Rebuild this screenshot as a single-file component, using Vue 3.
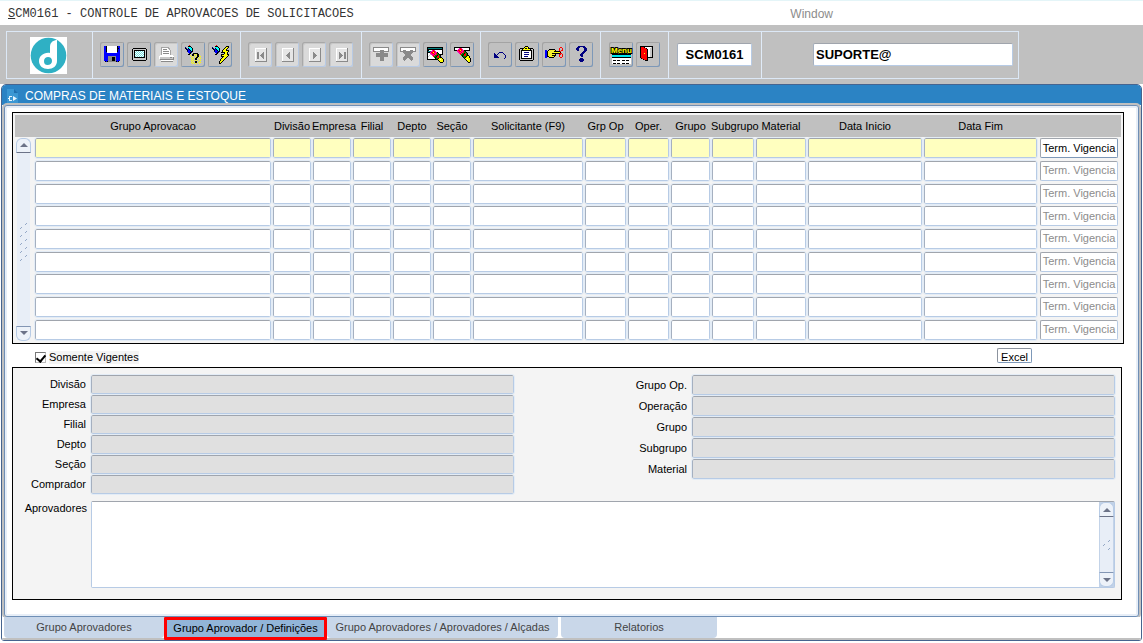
<script setup>
import { ref, h } from 'vue'

const palette = {
  K: '#000000', W: '#ffffff', B: '#0000ff', N: '#000080', G: '#8a8a8a', g: '#a4a4a4',
  l: '#c8c8c8', s: '#e6e6e6', Y: '#ffff00', R: '#ff0000', C: '#00ffff', T: '#008080', M: '#ff00a8',
  E: '#008000', y: '#e8e060', c: '#6fdede',
}

const icons = {
  save: [4, 4, [
    'BBKWWWWWWWWWWKBB', 'BBKWWWWWWWWWWKBB', 'BBKWWWWWWWWWWKKB', 'BBKWWWWWWWWWWKBB',
    'BBKWWWWWWWWWWKBB', 'BBKWWWWWWWWWWKBB', 'BBBWWWWWWWWWWBBB', 'BBBBBBBBBBBBBBBB',
    'BBBBBBBBBBBBBBBB', 'BBBBBBBBBBBBBBBB', 'BBBBGGGGGGGGBBBB', 'BBBBGGGGKKKGBBBB',
    'BBBBGGGGKKKGBBBB', 'BBBBGGGGKKKGBBBB', 'BBBBGGGGKKKGBBBB', '.KBKGGGGGGGGKBK.']],
  screen: [5, 6, [
    '.KKKKKKKKKKKKK.', 'KlllllllllllllK', 'KlKKKKKKKKKKKlK', 'KlKWcWcWcWcWKlK', 'KlKcWcWcWcWcKlK',
    'KlKWcWcWcWcWKlK', 'KlKcWcWcWcWcKlK', 'KlKWcWcWcWcWKlK', 'KlKcWcWcWcWcKlK', 'KlKKKKKKKKKKKlK',
    'KlllllllllllllK', 'KlllllllllllllK', '.KKKKKKKKKKKKK.']],
  print: [5, 5, [
    '..gggggggg......', '..gWWWWWWgg.....', '..gWGGGGWWg.....', '..gWWWWWWWWg....', '..gWGGGGGGWg....',
    '..gWWWWWWWWg....', '..gWGGGGGGWg....', '..gWWWWWWWWg....', '.WWWWWWWWWWWWW..', 'WWWWWWWWWWWWWWW.',
    'WllllllllllGGlG.', 'WlllllllllllllG.', '.GGGGGGGGGGGGGG.', '..WWWWWWWWWWWW..', '..GGGGGGGGGGGG..']],
  find: [4, 3, [
    '....R...............', '...KKK..............', 'N..CCCK.............', 'KN.KCCCK............',
    '.KNBKCCK............', '..KBBKCK............', '..NBBBKK............', '...BBKN.............',
    '....NK..KKKKK.......', '...KK..KKY.YKK......', '.....Y.KK.Y.KKY.....', '......Y.Y..YKK.Y....',
    '.......Y..YKK.Y.....', '......Y.Y.KK.Y.Y....', '.......Y..KK..Y.....', '......Y.Y.Y.Y..Y....',
    '.......Y..KK..Y.....', '......Y.Y.KK.Y.Y....', '.......Y.Y.Y..Y.....']],
  flash: [4, 3, [
    '....R............', '...KKK........KKK', 'N..CCCK......KYYK', 'KN.KCCCK....KYYK.',
    '.KNBKCCK...KYYK..', '..KBBKCK..KYYYKKK', '..NBBBKK..KYYYYYK', '...BBKN..KKKKYYK.',
    '....NK......KYYK.', '...KK....KKKYYYKK', '.........KYYYYYYK', '.........KKKYYYK.',
    '..........KYYYK..', '.........KYYYK...', '........KYYYK....', '........KYYK.....',
    '.......KYYK......', '.......KYK.......', '.......KK........']],
  first: [7, 6, [
    'WWWWWWWWWWWG', 'WssssssssssG', 'WssssssssssG', 'WssssssssssG', 'WsGGssssGssG', 'WsGGsssGGssG',
    'WsGGssGGGssG', 'WsGGsGGGGssG', 'WsGGssGGGssG', 'WsGGsssGGssG', 'WsGGssssGssG', 'WssssssssssG',
    'WssssssssssG', 'GGGGGGGGGGGG']],
  prev: [7, 6, [
    'WWWWWWWWWWWG', 'WssssssssssG', 'WssssssssssG', 'WssssssssssG', 'WssssssGsssG', 'WsssssGGsssG',
    'WssssGGGsssG', 'WsssGGGGsssG', 'WssssGGGsssG', 'WsssssGGsssG', 'WssssssGsssG', 'WssssssssssG',
    'WssssssssssG', 'GGGGGGGGGGGG']],
  next: [7, 6, [
    'WWWWWWWWWWWG', 'WssssssssssG', 'WssssssssssG', 'WssssssssssG', 'WsssGssssssG', 'WsssGGsssssG',
    'WsssGGGssssG', 'WsssGGGGsssG', 'WsssGGGssssG', 'WsssGGsssssG', 'WsssGssssssG', 'WssssssssssG',
    'WssssssssssG', 'GGGGGGGGGGGG']],
  last: [7, 6, [
    'WWWWWWWWWWWG', 'WssssssssssG', 'WssssssssssG', 'WssssssssssG', 'WssGssssGGsG', 'WssGGsssGGsG',
    'WssGGGssGGsG', 'WssGGGGsGGsG', 'WssGGGssGGsG', 'WssGGsssGGsG', 'WssGssssGGsG', 'WssssssssssG',
    'WssssssssssG', 'GGGGGGGGGGGG']],
  add: [4, 5, [
    'GGGGGGGGGGGGGGGG', 'GWWWWWWWWWWWWWWG', 'GWWWWWWWWWWWWWWG', 'GWWWWWWGGGGWWWWG', 'GGGGGGGGGGGGGGGG',
    '.......GGGG.....', '...GGGGGGGGGGGG.', '...GGGGGGGGGGGG.', '...GGGGGGGGGGGG.', '...GGGGGGGGGGGG.',
    '.......GGGG.....', '.......GGGG.....', '.......GGGG.....', '.......GGGG.....']],
  remove: [4, 5, [
    'GGGGGGGGGGGGGGGG', 'GWWWWWWWWWWWWWWG', 'GWWWWWWWWWWWWWWG', 'GWWGGGWWWWGGGWWG', 'GGGGGGGGGGGGGGGG',
    '...GGGGGGGGGG...', '....GGGGGGGG....', '.....GGGGGG.....', '.....GGGGGG.....', '....GGGGGGGG....',
    '...GGGGGGGGGG...', '...GGGG..GGGG...', '...GGG....GGG...', '....G......G....']],
  queryClear: [4, 5, [
    'KKKKKKKKKKKKKKKK.', 'KTTTTTTTTTTTTTTK.', 'KKKKKKKKKKKKKKKK.', 'KKWWWMRMWWWWWWWK.',
    'KTTTMMRRMWWWWWWK.', 'KKKMRRYRMMKWWWWK.', 'KWWMMRRMMREKWWWK.', 'KWWlMMMRMREEKKKK.',
    'KWlWWMRMEEKREK...', 'KlWWWWREEKRREK...', 'KWWWWWWEKERREKK..', 'KWWWWWWWKEEKYYYK.',
    'KKKKKKKKKKKYYWYYK', '...........KYYYYK', '............KYYYK', '.............KKK.']],
  erase: [4, 5, [
    'KKKKKKKKKKKKKKKK.', 'KWWWWMRMWWWWWWWK.', 'KWWWMMRRMWWWWWWK.', 'KKKMRRYRMMKKKKKK.',
    '...MMRRMMREK.....', '....MMMRMREEK....', '.....MRMEEKREK...', '......REEKRREK...',
    '.......EKERREKK..', '........KEEEKYYK.', '.........KEKYYYK.', '..........KYYYYYK',
    '...........KYWYYK', '............KYYYK', '.............KYYK', '..............KK.']],
  undo: [6, 10, [
    '.....NNNN...', 'N...N....N..', 'NN.N......N.', 'NNN........N', 'NNNN.......N', 'NNNNN......N', '..........N.']],
  clipboard: [4, 4, [
    '......KKK......', '.....KYYYK.....', '.KKKKYKKYKKKKK.', 'KllKYYYYYYYKllK', 'KlKKKKKKKKKKKlK',
    'KlKWWWWWWWWWKlK', 'KlKWWNNNNNWWKlK', 'KlKWWWWWWWWWKlK', 'KlKWWNNNNNWWKlK', 'KlKWWWWWWWWWKlK',
    'KlKWWNNNNWWWKlK', 'KlKWWWWWWWWWKlK', 'KlKKKKKKKKKKKlK', 'KlllllllllllllK', '.KKKKKKKKKKKKK.']],
  cut: [3, 5, [
    '...............RR.', '..............R..R', '....KKKKKK....R..R', 'BB.KyYyYyYK...R.RR', 'BBKyYyYyYKKKKKKR..',
    'BBKYyYyYyYYYYYYK..', 'BBKyYyYKKKKKKKKRR.', 'BBKYyYyYyYK...RR.R', 'BBKyYyYKKKK...R..R',
    'BBKKYyYyYK....R..R', 'BB..KKKKK......RR.']],
  help: [7, 4, [
    '..NNNNNNN..', '.NNN...NNN.', 'NNN.....NNN', 'NNN.....NNN', '.NN.....NNN', '.......NNN.', '......NNN..',
    '.....NNN...', '....NNN....', '....NNN....', '.....NN....', '...........', '....NNN....', '...NNNNN...',
    '...NNNNN...', '....NNN....']],
  exit: [4, 4, [
    'KKKKKKKKKKKKK', 'KRRRKWWWWWWlK', 'KRRRRRKWWWllK', 'KRRRRRRKWWllK', 'KRRRRRRKWWllK', 'KRRRRRRKWWllK',
    'KRRRRRRKWWllK', 'KRRRYRRKWWllK', 'KRRRRRRKWWllK', 'KRRRRRRKWWllK', 'KRRRRRRKWWllK', 'KRRRRRRKKKKKK',
    '.KRRRRRK.....', '...KRRRK.....', '.....KKK.....']],
}

// Draws an icon as horizontal runs of same-coloured pixels.
function PixelIcon(props) {
  const [ox, oy, rows] = icons[props.name]
  const rects = []
  rows.forEach((row, y) => {
    let x = 0
    while (x < row.length) {
      let end = x + 1
      while (end < row.length && row[end] === row[x]) end++
      if (palette[row[x]]) {
        rects.push(h('rect', { x: ox + x, y: oy + y, width: end - x, height: 1, fill: palette[row[x]] }))
      }
      x = end
    }
  })
  return h('svg', { width: 24, height: 25, viewBox: '0 0 24 25', 'shape-rendering': 'crispEdges', 'aria-hidden': 'true' }, rects)
}
PixelIcon.props = ['name']

const toolGroups = [
  { size: 'g148', tools: [
    { icon: 'save', label: 'Salvar' }, { icon: 'screen', label: 'Tela' },
    { icon: 'print', label: 'Imprimir', off: true }, { icon: 'find', label: 'Consultar' },
    { icon: 'flash', label: 'Executar consulta' }] },
  { size: 'g121', tools: [
    { icon: 'first', label: 'Primeiro', off: true }, { icon: 'prev', label: 'Anterior', off: true },
    { icon: 'next', label: 'Próximo', off: true }, { icon: 'last', label: 'Último', off: true }] },
  { size: 'g119', tools: [
    { icon: 'add', label: 'Inserir', off: true }, { icon: 'remove', label: 'Remover', off: true },
    { icon: 'queryClear', label: 'Limpar tela' }, { icon: 'erase', label: 'Limpar campo' }] },
  { size: 'g120', tools: [
    { icon: 'undo', label: 'Desfazer' }, { icon: 'clipboard', label: 'Colar' },
    { icon: 'cut', label: 'Recortar' }, { icon: 'help', label: 'Ajuda' }] },
  { size: 'g68', tools: [{ icon: 'menu', label: 'Menu' }, { icon: 'exit', label: 'Sair' }] },
]

const columns = [
  ['Grupo Aprovacao', 'auto'], ['Divisão', 'w40'], ['Empresa', 'w40'], ['Filial', 'w40'], ['Depto', 'w40'],
  ['Seção', 'w40'], ['Solicitante (F9)', 'w112'], ['Grp Op', 'w43'], ['Oper.', 'w43'], ['Grupo', 'w41'],
  ['Subgrupo', 'w44'], ['Material', 'w52'], ['Data Inicio', 'w116'], ['Data Fim', 'w115'],
]
const leftFields = ['Divisão', 'Empresa', 'Filial', 'Depto', 'Seção', 'Comprador']
const rightFields = ['Grupo Op.', 'Operação', 'Grupo', 'Subgrupo', 'Material']
const tabs = [
  ['Grupo Aprovadores', 't160'], ['Grupo Aprovador / Definições', 't163'],
  ['Grupo Aprovadores / Aprovadores / Alçadas', 't230'], ['Relatorios', 't156'],
]
const activeTab = ref(1)
const onlyCurrent = ref(true)
const code = ref('SCM0161')
const user = ref('SUPORTE@')
</script>

<template>
  <div class="page">
    <header class="menubar">
      <span class="program"><u>S</u>CM0161 - CONTROLE DE APROVACOES DE SOLICITACOES</span>
      <button class="menu-window" type="button">Window</button>
    </header>

    <div class="toolbar">
      <div class="toolframe">
        <div class="group brand">
          <svg class="logo" viewBox="0 0 37 37" role="img" aria-label="Logo">
            <rect width="37" height="37" fill="#fff" />
            <circle cx="18.500" cy="18.500" r="17.800" fill="#2fb0c4" />
            <path d="M26 3c-4 1-6 3-6 7v6c-6-1-11 3-11 8 0 5 4 8 9 8s9-3 9-8V3zM18 20c2.500 0 4 1.500 4 4s-2 4-4.500 4-3.500-1.500-3.500-4 2-4 4-4z" fill="#fff" fill-rule="evenodd" />
          </svg>
        </div>
        <div v-for="group in toolGroups" :key="group.size" class="group" :class="group.size">
          <button v-for="tool in group.tools" :key="tool.icon" class="tool" type="button" :aria-label="tool.label" :disabled="tool.off">
            <svg v-if="tool.icon === 'menu'" width="24" height="25" viewBox="0 0 24 25" shape-rendering="crispEdges" aria-hidden="true">
              <rect x="3" y="12" width="19" height="10" fill="#fff" />
              <rect x="3" y="12" width="19" height="4" fill="#000" />
              <rect x="3" y="13" width="19" height="2" fill="#00e8f0" />
              <path d="M4 18.500h7M13 18.500h8M4 21.500h7M13 21.500h8" stroke="#000" stroke-dasharray="3 1" />
              <text class="menu-glyph" x="2" y="11">Menu</text>
            </svg>
            <PixelIcon v-else :name="tool.icon" />
          </button>
        </div>
        <div class="group g93"><input v-model="code" class="field code" aria-label="Programa" /></div>
        <div class="group userbox"><input v-model="user" class="field user" aria-label="Usuário" /></div>
      </div>
    </div>

    <main class="window">
      <h1 class="caption">
        <svg width="12" height="14" viewBox="0 0 12 14" aria-hidden="true">
          <path d="M0 0h7l4 4v10H0z" fill="#3b97d3" />
          <path d="M7 0v4h4z" fill="#1f6fae" />
          <path d="M2 7h3v1H3v3h2v1H2v-2H1V9h1zM6 7l4 2.500L6 12z" fill="#e8f6ff" />
        </svg>
        COMPRAS DE MATERIAIS E ESTOQUE
      </h1>

      <div class="canvas">
        <section class="grid-panel">
          <table class="grid">
            <colgroup>
              <col class="w19" />
              <col v-for="c in columns" :key="c[0]" :class="c[1]" />
              <col class="w83" />
            </colgroup>
            <thead>
              <tr>
                <th></th>
                <th v-for="c in columns" :key="c[0]" scope="col">{{ c[0] }}</th>
                <th></th>
              </tr>
            </thead>
            <tbody>
              <tr v-for="row in 9" :key="row" :class="{ current: row === 1 }">
                <td v-if="row === 1" rowspan="9" class="scroll-cell">
                  <div class="scroll">
                    <button type="button" class="arrow up" aria-label="Rolar para cima"></button>
                    <span class="track"><svg width="8" height="44" viewBox="0 0 8 44" aria-hidden="true">
                      <path v-for="n in 5" :key="n" :d="`M5 ${n * 8}l2-2M0 ${n * 8 + 4}l2-2`" stroke="#94a8c6" />
                    </svg></span>
                    <button type="button" class="arrow down" aria-label="Rolar para baixo"></button>
                  </div>
                </td>
                <td v-for="c in columns" :key="c[0]"><input class="field" :aria-label="c[0]" /></td>
                <td><button type="button" class="term" :disabled="row !== 1">Term. Vigencia</button></td>
              </tr>
            </tbody>
          </table>
        </section>

        <div class="options">
          <label class="check"><input v-model="onlyCurrent" type="checkbox" /><span>Somente Vigentes</span></label>
          <button type="button" class="excel">Excel</button>
        </div>

        <section class="details">
          <div class="cols">
            <div class="stack">
              <label v-for="f in leftFields" :key="f" class="line"><span>{{ f }}</span><input class="field" readonly /></label>
            </div>
            <div class="stack tall">
              <label v-for="f in rightFields" :key="f" class="line"><span>{{ f }}</span><input class="field" readonly /></label>
            </div>
          </div>
          <div class="approvers">
            <label for="approvers">Aprovadores</label>
            <div class="memo">
              <textarea id="approvers"></textarea>
              <div class="scroll">
                <button type="button" class="arrow up" aria-label="Rolar para cima"></button>
                <span class="track"><svg width="8" height="12" viewBox="0 0 8 12" aria-hidden="true">
                  <path d="M5 3l2-2M0 7l2-2M5 11l2-2" stroke="#94a8c6" />
                </svg></span>
                <button type="button" class="arrow down" aria-label="Rolar para baixo"></button>
              </div>
            </div>
          </div>
        </section>
      </div>

      <nav class="tabs" role="tablist">
        <button v-for="(t, i) in tabs" :key="t[0]" type="button" role="tab" class="tab" :class="[t[1], { active: activeTab === i }]" :aria-selected="activeTab === i" @click="activeTab = i">{{ t[0] }}</button>
      </nav>
    </main>
  </div>
</template>

<style>
body { background: #fff; }
</style>

<style scoped>
* { box-sizing: border-box; }
.page { font: 11px/13px "Liberation Sans", Arial, sans-serif; color: #000; }
button, input, textarea { font: inherit; color: inherit; margin: 0; padding: 0; }

.menubar { display: flex; justify-content: space-between; align-items: center; height: 25px; padding: 2px 310px 0 8px; border-top: 1px solid #e4f5f8; background: #fff; }
.program { font: 12px/14px "Liberation Mono", monospace; color: #333; }
.menu-window { border: 0; background: none; font-size: 12px; line-height: 14px; color: #8c8c8c; }

.toolbar { background: #c0c0c0; padding: 6px 124px 5px 6px; }
.toolframe { display: flex; height: 48px; border: 1px solid #dce8f6; }
.group { display: flex; align-items: center; gap: 3px; flex: none; padding: 0 0 1px 7px; border-left: 1px solid #e0ebf8; }
.brand { width: 85px; border-left: 0; padding: 0 0 0 23px; }
.logo { width: 37px; height: 37px; }
.g148 { width: 148px; }
.g121 { width: 121px; }
.g119 { width: 119px; }
.g120 { width: 120px; }
.g68 { width: 68px; padding-left: 8px; }
.g93 { width: 93px; padding-left: 8px; }
.userbox { flex: 1; padding: 0 5px 1px 51px; }
.tool { display: block; width: 24px; height: 25px; border: 0; background: #c0c0c0; border-radius: 2px; box-shadow: inset 1px 1px #a3a3a3, inset -1px -1px #7d98b8; }
.tool:disabled { background: #dadada; box-shadow: inset 1px 1px #a8a8a8, inset -1px -1px #b8cae4, inset 2px 2px #c8c8c8; }
.tool svg { display: block; }
.menu-glyph { font: bold 8px/8px "Liberation Sans", sans-serif; fill: #ffff00; stroke: #000; stroke-width: 2px; paint-order: stroke; }

.field { display: block; width: 100%; height: 20px; border: 1px solid #b7cbe5; border-top-color: #a0a5ad; border-left-color: #a5b0c0; border-radius: 2px; background: #fff; outline: 1px solid #e3ecf6; }
.code, .user { height: 23px; font-size: 13px; font-weight: bold; outline: none; }
.code { width: 75px; text-align: center; }
.user { padding-left: 2px; }

.window { margin: 0 1px; border: 1px solid #46648f; border-radius: 5px 5px 3px 3px; background: #fff; overflow: hidden; }
.caption { display: flex; align-items: center; gap: 6px; height: 20px; margin: 0; padding: 2px 0 0 5px; background: #2b83c4; color: #fff; font-size: 12px; font-weight: normal; line-height: 14px; }
.canvas { margin: 0 2px; padding: 6px 14px 16px 7px; border: 1px solid #6f8fb6; border-radius: 3px; box-shadow: inset 0 0 0 2px #e7eef7, 0 0 0 2px #c0c0c0; background: #fff; }

.grid-panel { border: 1px solid #000; padding: 2px; background: #f4f4f4; }
.grid { width: 100%; height: 226px; table-layout: fixed; border-collapse: collapse; }
.grid th { height: 22px; padding: 0; background: #c0c0c0; font-weight: normal; text-align: center; white-space: nowrap; overflow: visible; }
.grid td { padding: 0 1px; vertical-align: middle; }
.grid .field { height: 20px; }
.current .field { background: #ffffbf; }
.w19 { width: 19px; }
.w40 { width: 40px; }
.w41 { width: 41px; }
.w43 { width: 43px; }
.w44 { width: 44px; }
.w52 { width: 52px; }
.w83 { width: 83px; }
.w112 { width: 112px; }
.w115 { width: 115px; }
.w116 { width: 116px; }
.term { display: block; width: 78px; height: 20px; margin-left: 1px; border: 1px solid #a0a5ad; border-right-color: #7d98b8; border-bottom-color: #7d98b8; border-radius: 2px; background: #fff; white-space: nowrap; }
.term:disabled { color: #8c8c8c; border-right-color: #b7cbe5; border-bottom-color: #b7cbe5; }

.scroll { display: flex; flex-direction: column; width: 15px; }
.scroll-cell .scroll { height: 203px; }
.arrow { display: flex; justify-content: center; align-items: center; flex: none; width: 15px; height: 15px; border: 1px solid #b7cbe5; background: #edf2f9; }
.arrow::before { content: ""; border: 4px solid transparent; }
.up { border-radius: 6px 6px 0 0; border-bottom-color: #6c7388; }
.up::before { border-top: 0; border-bottom-color: #6c7388; }
.down { border-radius: 0 0 6px 6px; border-top-color: #8396b4; }
.down::before { border-bottom: 0; border-top-color: #6c7388; }
.track { display: flex; flex: 1; align-items: center; justify-content: center; margin: 0 1px; background: #e8eef7; }

.options { display: flex; justify-content: space-between; align-items: center; height: 23px; padding: 0 92px 0 23px; }
.check { display: flex; align-items: center; gap: 3px; padding-top: 4px; }
.check span { background: #f4f4f4; }
.check input { appearance: none; display: grid; place-items: center; width: 11px; height: 11px; border: 1px solid #777; border-right-color: #bbb; border-bottom-color: #bbb; background: #fff; }
.check input:checked::before { content: ""; width: 4px; height: 7px; margin-bottom: 2px; border: solid #000; border-width: 0 2px 2px 0; rotate: 40deg; }
.excel { width: 35px; height: 15px; padding-top: 2px; border: 1px solid #8c939e; border-right-color: #7d98b8; border-bottom-color: #7d98b8; border-radius: 2px; background: #fff; overflow: hidden; }

.details { margin-right: 2px; padding: 6px 6px 11px 0; border: 1px solid #000; background: #f4f4f4; }
.cols { display: grid; grid-template-columns: 1fr 1fr; column-gap: 100px; padding-top: 1px; }
.stack { display: flex; flex-direction: column; gap: 1px; }
.line { display: flex; align-items: center; gap: 5px; }
.line span { width: 73px; flex: none; text-align: right; }
.line .field { flex: 1; height: 19px; min-width: 0; background: #e0e0e0; }
.tall .field { height: 20px; }
.approvers { display: flex; gap: 4px; margin-top: 7px; }
.approvers > label { width: 74px; flex: none; text-align: right; padding-top: 1px; }
.memo { display: flex; flex: 1; height: 87px; border: 1px solid #b7cbe5; border-top-color: #a0a5ad; border-radius: 2px; background: #c3d3e8; }
.memo textarea { flex: 1; border: 0; resize: none; outline: none; background: #fff; }

.tabs { display: flex; height: 23px; padding-left: 2px; background: #fff; border-bottom: 2px solid #c0c0c0; }
.tab { border: 0; background: #c9d7e9; color: #444; height: 21px; border-radius: 0 0 4px 4px; white-space: nowrap; }
.t160 { width: 160px; }
.t163 { width: 163px; }
.t230 { width: 231px; }
.t156 { width: 156px; margin-left: 3px; }
.tab.active { height: 23px; background: #92b5d8; color: #000; border: 3px solid #f00; border-radius: 1px; }
</style>
